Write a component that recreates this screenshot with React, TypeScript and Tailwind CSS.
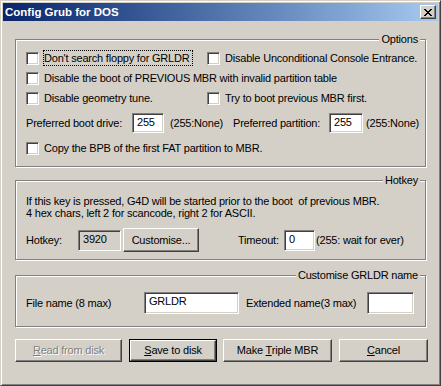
import React from "react";

const Check = () => (
  <span className="inline-block w-[13px] h-[13px] shrink-0 bg-white border border-t-[#808080] border-l-[#808080] border-b-white border-r-white shadow-[inset_1px_1px_0_#404040,inset_-1px_-1px_0_#d4d0c8]" />
);

const Field = ({ value, w, h = 20, ro = false }: { value: string; w: number; h?: number; ro?: boolean }) => (
  <span
    className={`inline-block shrink-0 pl-[4px] pt-[2px] leading-[13px] border border-t-[#808080] border-l-[#808080] border-b-white border-r-white shadow-[inset_1px_1px_0_#404040,inset_-1px_-1px_0_#d4d0c8] ${ro ? "bg-[#d4d0c8]" : "bg-white"}`}
    style={{ width: w, height: h }}
  >
    {value}
  </span>
);

const Group = ({ title, className, children }: { title: string; className: string; children: React.ReactNode }) => (
  <div className={`relative w-[411px] border border-[#808080] shadow-[inset_1px_1px_0_#fff,1px_1px_0_#fff] ${className}`}>
    <span className="absolute -top-[7px] right-[5px] bg-[#d4d0c8] px-[2px] leading-[13px]">{title}</span>
    {children}
  </div>
);

const Btn = ({ children, w, def = false, className = "" }: { children: React.ReactNode; w: number; def?: boolean; className?: string }) => (
  <div className={`shrink-0 h-[23px] ${def ? "border border-black" : ""} ${className}`} style={{ width: w }}>
    <div className="w-full h-full flex items-center justify-center border border-t-white border-l-white border-b-[#404040] border-r-[#404040] shadow-[inset_-1px_-1px_0_#808080] leading-[13px]">
      {children}
    </div>
  </div>
);

const Row = ({ children, className = "" }: { children: React.ReactNode; className?: string }) => (
  <div className={`flex items-center h-[20px] ${className}`}>{children}</div>
);

const CheckLabel = ({ text, focus = false, w }: { text: string; focus?: boolean; w?: number }) => (
  <div className="flex items-center">
    <Check />
    <span
      className={`ml-[4px] px-0 whitespace-nowrap overflow-hidden leading-[14px] border ${focus ? "border-dotted border-black" : "border-transparent"}`}
      style={w ? { width: w } : undefined}
    >
      {text}
    </span>
  </div>
);

export default function App() {
  return (
    <div className="w-[441px] h-[386px] bg-[#d4d0c8] text-[11px] tracking-[-0.2px] text-black font-['Liberation_Sans',Arial,sans-serif] select-none">
      <div className="w-[441px] h-[386px] flex flex-col border border-t-[#d4d0c8] border-l-[#d4d0c8] border-r-[#404040] border-b-[#404040] shadow-[inset_1px_1px_0_#fff,inset_-1px_-1px_0_#808080] p-[2px]">
        {/* title bar */}
        <div className="h-[18px] shrink-0 flex items-center justify-between bg-linear-to-r from-[#0a246a] to-[#a6caf0]">
          <span className="pl-[2px] text-white font-bold text-[11.5px] tracking-normal leading-[18px]">Config Grub for DOS</span>
          <div className="mr-[2px] w-[16px] h-[14px] bg-[#d4d0c8] border border-t-white border-l-white border-b-[#404040] border-r-[#404040] shadow-[inset_-1px_-1px_0_#808080] flex items-center justify-center">
            <svg width="8" height="7" viewBox="0 0 8 7" shapeRendering="crispEdges">
              <path d="M0 0h2v1h-2zM6 0h2v1h-2zM1 1h2v1h-2zM5 1h2v1h-2zM2 2h4v1h-4zM3 3h2v1h-2zM2 4h4v1h-4zM1 5h2v1h-2zM5 5h2v1h-2zM0 6h2v1h-2zM6 6h2v1h-2z" fill="#000" />
            </svg>
          </div>
        </div>

        {/* client */}
        <div className="flex flex-col pl-[12px]">
          <Group title="Options" className="mt-[18px] h-[128px] pt-[8px] pl-[10px]">
            <Row>
              <div className="w-[181px]">
                <CheckLabel text="Don't search floppy for GRLDR" focus w={150} />
              </div>
              <CheckLabel text="Disable Unconditional Console Entrance." />
            </Row>
            <Row>
              <CheckLabel text="Disable the boot of PREVIOUS MBR with invalid partition table" />
            </Row>
            <Row>
              <div className="w-[181px]">
                <CheckLabel text="Disable geometry tune." />
              </div>
              <CheckLabel text="Try to boot previous MBR first." />
            </Row>
            <Row className="mt-[5px]">
              <span className="w-[106px] shrink-0">Preferred boot drive:</span>
              <Field value="255" w={32} />
              <span className="ml-[6px] w-[63px] shrink-0">(255:None)</span>
              <span className="w-[96px] shrink-0">Preferred partition:</span>
              <Field value="255" w={34} />
              <span className="ml-[3px]">(255:None)</span>
            </Row>
            <Row className="mt-[5px]">
              <CheckLabel text="Copy the BPB of the first FAT partition to MBR." />
            </Row>
          </Group>

          <Group title="Hotkey" className="mt-[13px] h-[80px] pt-[14px] pl-[10px]">
            <div className="leading-[12px]">
              <div className="whitespace-pre">If this key is pressed, G4D will be started prior to the boot  of previous MBR.</div>
              <div>4 hex chars, left 2 for scancode, right 2 for ASCII.</div>
            </div>
            <div className="mt-[9px] flex items-center h-[24px]">
              <span className="w-[52px] shrink-0">Hotkey:</span>
              <Field value="3920" w={43} h={21} ro />
              <Btn w={76} className="ml-[2px] h-[24px]">Customise...</Btn>
              <span className="ml-[39px] w-[46px] shrink-0">Timeout:</span>
              <Field value="0" w={31} h={21} />
              <span className="ml-[1px]">(255: wait for ever)</span>
            </div>
          </Group>

          <Group title="Customise GRLDR name" className="mt-[15px] h-[52px] pt-[16px] pl-[10px]">
            <div className="flex items-center h-[22px]">
              <span className="w-[118px] shrink-0">File name (8 max)</span>
              <Field value="GRLDR" w={95} h={22} />
              <span className="ml-[7px] w-[121px] shrink-0">Extended name(3 max)</span>
              <Field value="" w={47} h={22} />
            </div>
          </Group>

          <div className="mt-[12px] flex">
            <Btn w={107}>
              <span className="text-[#808080] [text-shadow:1px_1px_0_#fff]">
                <span className="underline">R</span>ead from disk
              </span>
            </Btn>
            <Btn w={88} def className="ml-[7px]">
              <span>
                <span className="underline">S</span>ave to disk
              </span>
            </Btn>
            <Btn w={109} className="ml-[6px]">
              <span>
                Make <span className="underline">T</span>riple MBR
              </span>
            </Btn>
            <Btn w={89} className="ml-[7px]">
              <span>
                <span className="underline">C</span>ancel
              </span>
            </Btn>
          </div>
        </div>
      </div>
    </div>
  );
}
